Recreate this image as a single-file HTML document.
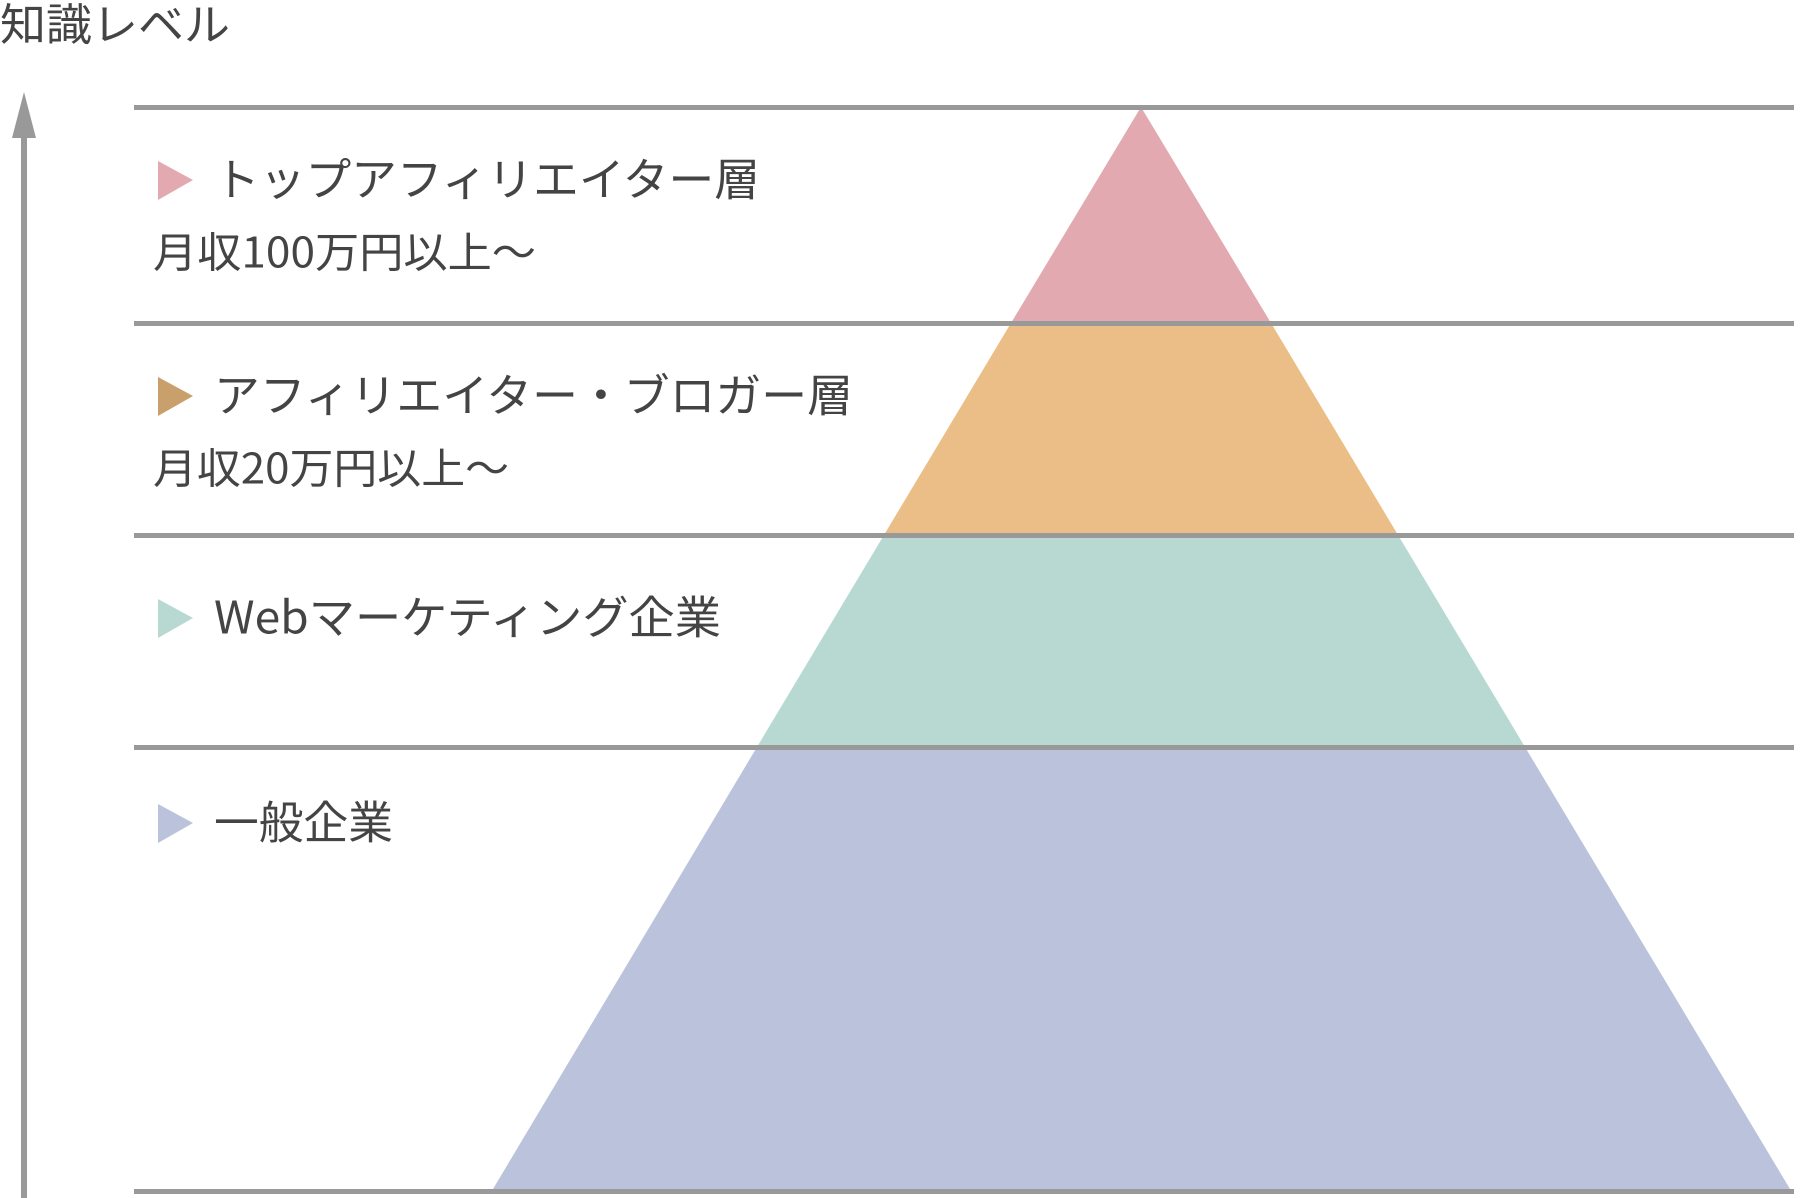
<!DOCTYPE html>
<html><head><meta charset="utf-8"><style>
html,body{margin:0;padding:0;background:#fff;}
svg{display:block;}
text{font-family:"Noto Sans CJK JP","Liberation Sans",sans-serif;fill:#444;}
</style></head><body>
<svg width="1800" height="1198" viewBox="0 0 1800 1198" xmlns="http://www.w3.org/2000/svg">
<polygon points="1141,107 1011,323 1271,323" fill="#e2aab0"/>
<polygon points="1011,323 884,535 1398,535 1271,323" fill="#eabe86"/>
<polygon points="884,535 757,747 1525,747 1398,535" fill="#b8d9d2"/>
<polygon points="757,747 490,1194 1793,1194 1525,747" fill="#bbc3dc"/>
<g fill="#999">
<rect x="134" y="105" width="1660" height="5"/>
<rect x="134" y="321" width="1660" height="5"/>
<rect x="134" y="533" width="1660" height="5"/>
<rect x="134" y="745" width="1660" height="5"/>
<rect x="134" y="1189" width="1660" height="5"/>
</g>
<rect x="21" y="130" width="6" height="1068" fill="#999"/>
<polygon points="24,92 12,138 36,138" fill="#999"/>
<text x="0" y="21" font-size="44" dominant-baseline="central" textLength="230" lengthAdjust="spacingAndGlyphs">知識レベル</text>
<polygon points="158,161 193,180 158,200" fill="#e2aab0"/>
<text x="214" y="176" font-size="45" dominant-baseline="central" textLength="546" lengthAdjust="spacingAndGlyphs">トップアフィリエイター層</text>
<text x="153" y="250" font-size="42" dominant-baseline="central" textLength="383" lengthAdjust="spacingAndGlyphs">月収100万円以上～</text>
<polygon points="158,377 193,396 158,416" fill="#c9a06b"/>
<text x="214" y="392" font-size="45" dominant-baseline="central" textLength="639" lengthAdjust="spacingAndGlyphs">アフィリエイター・ブロガー層</text>
<text x="153" y="466" font-size="42" dominant-baseline="central" textLength="356" lengthAdjust="spacingAndGlyphs">月収20万円以上～</text>
<polygon points="158,599 193,618 158,638" fill="#b8d9d2"/>
<text x="214" y="614" font-size="45" dominant-baseline="central" textLength="507" lengthAdjust="spacingAndGlyphs">Webマーケティング企業</text>
<polygon points="158,804 193,823 158,843" fill="#bbc3dc"/>
<text x="214" y="819" font-size="45" dominant-baseline="central" textLength="179" lengthAdjust="spacingAndGlyphs">一般企業</text>
</svg>
</body></html>
